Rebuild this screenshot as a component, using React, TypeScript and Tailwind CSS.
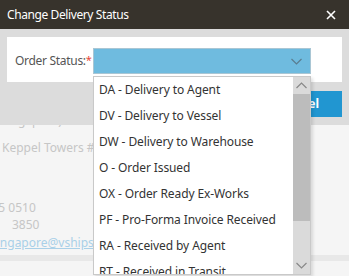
const OPTIONS = [
  'DA - Delivery to Agent',
  'DV - Delivery to Vessel',
  'DW - Delivery to Warehouse',
  'O - Order Issued',
  'OX - Order Ready Ex-Works',
  'PF - Pro-Forma Invoice Received',
  'RA - Received by Agent',
  'RT - Received in Transit',
];

function Chevron({ up = false, className = '' }: { up?: boolean; className?: string }) {
  return (
    <svg width="11" height="7" viewBox="0 0 11 7" className={className}>
      <path
        d={up ? 'M0.5 6 L5.5 1 L10.5 6' : 'M0.5 1 L5.5 6 L10.5 1'}
        fill="none"
        stroke="currentColor"
        strokeWidth="1.2"
      />
    </svg>
  );
}

function StatusDropdown() {
  return (
    <div className="absolute z-20 left-[93px] top-[76px] w-[218px] h-[199px] flex border border-[#c9c9c9] bg-white shadow-[2px_2px_3px_rgba(0,0,0,0.12)]">
      <ul className="flex-1 overflow-hidden">
        {OPTIONS.map((o) => (
          <li key={o} className="h-[26px] flex items-center pl-[5px] text-[12px] tracking-[-0.1px] text-[#333] whitespace-nowrap">
            {o}
          </li>
        ))}
      </ul>
      <div className="w-[17px] flex flex-col bg-[#dadada]">
        <div className="h-[17px] flex items-center justify-center text-[#888]">
          <Chevron up />
        </div>
        <div className="h-[127px] bg-[#bcbcbc]" />
        <div className="flex-1" />
        <div className="h-[17px] flex items-center justify-center text-[#888]">
          <Chevron />
        </div>
      </div>
    </div>
  );
}

export default function App() {
  return (
    <div
      className="relative w-[349px] h-[276px] overflow-hidden bg-[#f5f5f5]"
      style={{ fontFamily: '"Noto Sans", "Open Sans", sans-serif' }}
    >
      <div className="h-[29px] bg-[#37332c] flex items-center justify-between pl-[7px] pr-[13px]">
        <span className="text-white text-[12px] tracking-[-0.4px]">Change Delivery Status</span>
        <svg width="10" height="10" viewBox="0 0 10 10">
          <path d="M1 1 L9 9 M9 1 L1 9" stroke="white" strokeWidth="1.6" />
        </svg>
      </div>

      <div className="h-[96px] bg-[#dcdcdc] px-[7px] pt-[8px] relative">
        <div className="h-[45px] bg-white flex items-center pl-[8px] pt-[3px]">
          <span className="text-[12px] text-[#555] w-[78px] whitespace-nowrap tracking-[-0.3px]">
            Order Status:<span className="text-[#e8463a] text-[11px] align-top">*</span>
          </span>
          <div className="w-[218px] h-[26px] bg-[#6fbbdf] border border-[#a9c6d4] flex items-center justify-end pr-[8px] text-[#5a7d90]">
            <Chevron />
          </div>
        </div>
        <div className="flex justify-end mt-[9px]">
          <button className="h-[26px] px-[23px] bg-[#2196d1] text-white text-[12px] font-bold">
            Cancel
          </button>
        </div>
      </div>

      <div className="h-[151px] overflow-hidden text-[12px] text-[#c6c6c6] whitespace-nowrap">
        <div className="-mt-[13px] -ml-[9px]">
          <div className="h-[19px]">V.Singapore) Pte Ltd</div>
          <div className="h-[26px] pt-[8px] ml-[11px]">Keppel Towers #22-01</div>
          <div className="h-[42px]" />
          <div className="h-[17px] -ml-[37px]">+65 6225 0510</div>
          <div className="h-[18px] ml-[21px]">3850</div>
          <div className="h-[18px] text-[#a9d0e8] underline">singapore@vships.com</div>
        </div>
        <div className="mt-[3px] h-[6px] bg-[#e8e8e8]" />
      </div>

      <StatusDropdown />
    </div>
  );
}
